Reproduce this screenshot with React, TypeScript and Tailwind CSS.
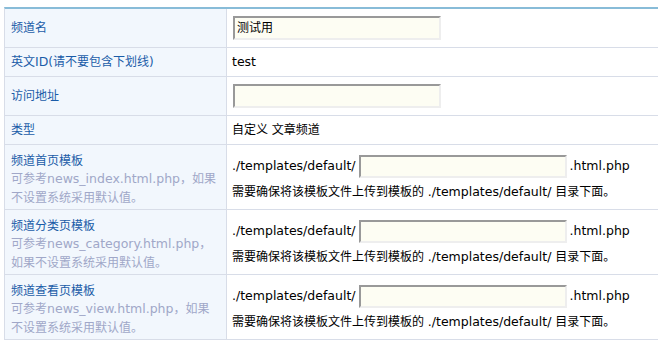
import React from 'react';

const L: React.FC<{ children: React.ReactNode }> = ({ children }) => (
    <span className="text-[12.5px]">{children}</span>
);

const Label: React.FC<{ children: React.ReactNode }> = ({ children }) => (
    <div className="flex items-center bg-[#f2f7fd] border-r border-[#d8dde8] pl-[6px] text-[#1a5ca8]">{children}</div>
);

const Input: React.FC<{ value?: string; className?: string }> = ({ value = '', className = '' }) => (
    <div
        className={`bg-[#fdfdf3] border-2 border-t-[#999999] border-l-[#999999] border-b-[#eeeeee] border-r-[#eeeeee] pl-[2px] flex items-center text-black ${className}`}
    >
        {value}
    </div>
);

const TemplateRow: React.FC<{ title: string; hint: React.ReactNode }> = ({ title, hint }) => (
    <div className="grid grid-cols-[222px_1fr] h-[65px] border-b border-[#d8dde8]">
        <div className="flex flex-col bg-[#f2f7fd] border-r border-[#d8dde8] pl-[6px] pt-[8px] whitespace-nowrap">
            <div className="text-[#1a5ca8] leading-[16px]">{title}</div>
            <div className="text-[#a0a7c8] leading-[19px]">{hint}</div>
        </div>
        <div className="flex flex-col justify-center pl-[5px] pt-[3px] gap-[5px] whitespace-nowrap">
            <div className="flex items-center">
                <L>./templates/default/</L>
                <Input className="w-[208px] h-[23px] ml-[3px] mr-[3px]" />
                <L>.html.php</L>
            </div>
            <div>
                需要确保将该模板文件上传到模板的 <L>./templates/default/</L> 目录下面。
            </div>
        </div>
    </div>
);

export default function App() {
    return (
        <div
            className="w-[658px] h-[345px] bg-white pt-[7px] pl-[4px] text-[12px] text-black overflow-hidden"
            style={{ fontFamily: '"DejaVu Sans", "Noto Sans CJK SC", sans-serif' }}
        >
            <div className="border-t-2 border-t-[#88bcd8] border-l border-l-[#d8dde8]">
                <div className="grid grid-cols-[222px_1fr] h-[39px] border-b border-[#d8dde8]">
                    <Label>频道名</Label>
                    <div className="flex items-center pl-[6px]">
                        <Input value="测试用" className="w-[208px] h-[24px]" />
                    </div>
                </div>
                <div className="grid grid-cols-[222px_1fr] h-[29px] border-b border-[#d8dde8]">
                    <Label>
                        英文<L>ID</L>(请不要包含下划线)
                    </Label>
                    <div className="flex items-center pl-[5px]">
                        <L>test</L>
                    </div>
                </div>
                <div className="grid grid-cols-[222px_1fr] h-[39px] border-b border-[#d8dde8]">
                    <Label>访问地址</Label>
                    <div className="flex items-center pl-[6px]">
                        <Input className="w-[208px] h-[24px]" />
                    </div>
                </div>
                <div className="grid grid-cols-[222px_1fr] h-[29px] border-b border-[#d8dde8]">
                    <Label>类型</Label>
                    <div className="flex items-center pl-[5px]">自定义 文章频道</div>
                </div>
                <TemplateRow
                    title="频道首页模板"
                    hint={
                        <>
                            可参考<L>news_index.html.php</L>，如果
                            <br />
                            不设置系统采用默认值。
                        </>
                    }
                />
                <TemplateRow
                    title="频道分类页模板"
                    hint={
                        <>
                            可参考<L>news_category.html.php</L>，
                            <br />
                            如果不设置系统采用默认值。
                        </>
                    }
                />
                <TemplateRow
                    title="频道查看页模板"
                    hint={
                        <>
                            可参考<L>news_view.html.php</L>，如果
                            <br />
                            不设置系统采用默认值。
                        </>
                    }
                />
            </div>
        </div>
    );
}
